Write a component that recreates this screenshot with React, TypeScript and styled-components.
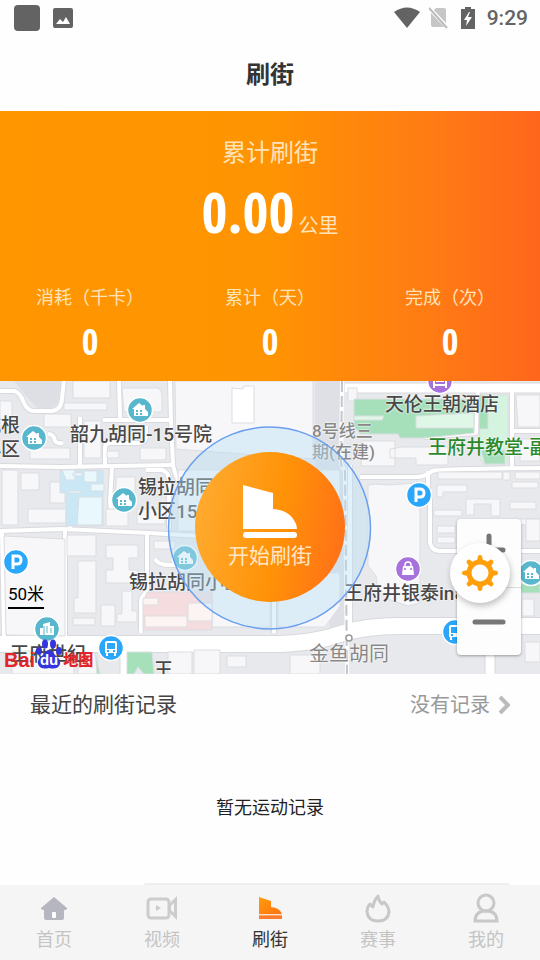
import React from "react";
import styled, { createGlobalStyle } from "styled-components";

const GlobalStyle = createGlobalStyle`
  * { box-sizing: border-box; }
  body { margin: 0; background: #fefefe; }
  button { border: 0; padding: 0; background: none; font: inherit; color: inherit; cursor: pointer; }
`;

const Page = styled.div`
  min-height: 100vh;
  display: flex;
  flex-direction: column;
  background: #fefefe;
  color: #333;
  font-family: Roboto, "Noto Sans CJK SC", sans-serif;
`;

const StatusBar = styled.div`
  display: flex;
  align-items: center;
  justify-content: space-between;
  height: 36px;
  padding: 0 12px 0 14px;
  color: #636363;
`;

const StatusGroup = styled.div<{ $gap: number }>`
  display: flex;
  align-items: center;
  gap: ${(p) => p.$gap}px;
`;

const AppBadge = styled.span`
  width: 26px;
  height: 26px;
  border-radius: 4px;
  background: #636363;
`;

const Clock = styled.time`
  font-size: 21px;
  line-height: 24px;
  font-weight: 500;
`;

const Header = styled.header`
  display: flex;
  align-items: center;
  justify-content: center;
  height: 75px;
  padding-top: 2px;
`;

const Title = styled.h1`
  margin: 0;
  font-size: 24px;
  line-height: 36px;
  font-weight: 700;
  color: #333;
`;

const Summary = styled.section`
  display: flex;
  flex-direction: column;
  align-items: center;
  height: 270px;
  padding-top: 24px;
  background: linear-gradient(90deg, #ff9600 0%, #ff9402 50%, #ff7b14 80%, #ff661c 100%);
`;

const SummaryTitle = styled.h2`
  margin: 0;
  font-size: 24px;
  line-height: 36px;
  font-weight: 400;
  color: #ffe3b8;
`;

const Distance = styled.div`
  display: flex;
  align-items: baseline;
  gap: 4px;
  margin-top: 10px;
`;

const Figure = styled.span<{ $size: number }>`
  font-family: "Open Sans Condensed", "Liberation Sans Narrow", "Roboto Condensed", Roboto, sans-serif;
  font-size: ${(p) => p.$size}px;
  line-height: 60px;
  font-weight: 700;
  color: #fff;
`;

const Unit = styled.span`
  font-size: 20px;
  line-height: 30px;
  font-weight: 400;
  color: #ffe3b8;
`;

const Metrics = styled.dl`
  display: grid;
  grid-template-columns: repeat(3, 1fr);
  width: 100%;
  margin: 43px 0 0;
`;

const Metric = styled.div`
  display: flex;
  flex-direction: column;
  align-items: center;
`;

const MetricName = styled.dt`
  font-size: 18px;
  line-height: 28px;
  font-weight: 400;
  color: #ffe3b8;
`;

const MetricValue = styled.dd`
  margin: 0;
`;

const MapArea = styled.section`
  position: relative;
  display: flex;
  align-items: center;
  justify-content: center;
  height: 293px;
  padding-bottom: 2px;
  overflow: hidden;
  background: #e8e9ed;
`;

const MapLayer = styled.svg`
  position: absolute;
  inset: 0;
  width: 100%;
  height: 100%;
`;

const Place = styled.span<{ $x: number; $y: number; $size?: number; $color?: string; $weight?: number }>`
  position: absolute;
  left: ${(p) => p.$x}px;
  top: ${(p) => p.$y}px;
  font-size: ${(p) => p.$size ?? 19}px;
  line-height: 26px;
  font-weight: ${(p) => p.$weight ?? 500};
  color: ${(p) => p.$color ?? "#484848"};
  white-space: pre;
  text-shadow: 0 0 2px #fff, 0 0 2px #fff;
`;

const MapScale = styled.div`
  position: absolute;
  left: 8px;
  top: 201px;
  width: 36px;
  border-bottom: 2px solid #000;
  font-size: 17px;
  line-height: 25px;
  text-align: center;
  color: #000;
  white-space: nowrap;
`;

const MapLogo = styled.div`
  position: absolute;
  left: 4px;
  top: 258px;
  display: flex;
  align-items: flex-end;
  font-family: "Liberation Sans", "Noto Sans CJK SC", sans-serif;
  font-size: 20px;
  line-height: 18px;
  font-weight: 700;
  color: #e0262b;
`;

const LogoPaw = styled.span`
  position: relative;
  display: flex;
  align-items: flex-end;
  justify-content: center;
  width: 28px;
  height: 30px;
  color: #fff;
  font-size: 15px;
  line-height: 18px;
  svg { position: absolute; inset: 0; }
  b { position: relative; }
`;

const LogoTail = styled.span`
  font-size: 15px;
  font-weight: 900;
`;

const StartButton = styled.button`
  position: relative;
  display: flex;
  flex-direction: column;
  align-items: center;
  width: 150px;
  height: 150px;
  padding-top: 33px;
  border-radius: 50%;
  background: linear-gradient(100deg, #ffab30 5%, #ff9207 55%, #ff6c1b 100%);
`;

const StartLabel = styled.span`
  font-size: 21px;
  line-height: 34px;
  font-weight: 400;
  color: #ffe6c6;
`;

const ZoomPanel = styled.div`
  position: absolute;
  top: 138px;
  right: 19px;
  display: flex;
  flex-direction: column;
  width: 64px;
  border-radius: 4px;
  background: #fdfdfd;
  box-shadow: 0 1px 3px rgba(0, 0, 0, 0.35);
`;

const ZoomButton = styled.button`
  display: flex;
  align-items: center;
  justify-content: center;
  height: 68px;
  &:first-child { padding-bottom: 6px; }
  & + & { border-top: 1px solid #ddd; }
`;

const SettingsButton = styled.button`
  position: absolute;
  top: 162px;
  right: 30px;
  display: flex;
  align-items: center;
  justify-content: center;
  width: 60px;
  height: 60px;
  border-radius: 50%;
  background: #fefefe;
  box-shadow: 1px 3px 6px rgba(0, 0, 0, 0.25);
`;

const Records = styled.section`
  flex: 1;
  display: flex;
  flex-direction: column;
`;

const RecordsHead = styled.div`
  display: flex;
  align-items: center;
  justify-content: space-between;
  height: 62px;
  padding: 0 30px;
`;

const RecordsTitle = styled.h2`
  margin: 0;
  font-size: 21px;
  line-height: 32px;
  font-weight: 400;
  color: #444;
`;

const RecordsLink = styled.a`
  display: flex;
  align-items: center;
  gap: 8px;
  font-size: 20px;
  line-height: 30px;
  color: #999;
  text-decoration: none;
`;

const Empty = styled.p`
  margin: 58px 0 0;
  font-size: 18px;
  line-height: 28px;
  text-align: center;
  color: #222;
`;

const CardEdge = styled.div`
  height: 2px;
  margin: 0 30px 0 144px;
  border-radius: 2px 2px 0 0;
  background: #eee;
`;

const TabBar = styled.nav`
  display: grid;
  grid-template-columns: repeat(5, 1fr);
  height: 75px;
  background: #f5f5f5;
`;

const Tab = styled.a<{ $active?: boolean }>`
  display: flex;
  flex-direction: column;
  align-items: center;
  padding-top: 8px;
  font-size: 18px;
  line-height: 30px;
  font-weight: 400;
  color: ${(p) => (p.$active ? "#333" : "#c4c4c4")};
  text-decoration: none;
  svg { display: block; }
`;

const roads = [
  "M0 10H14Q20 11 24 22Q28 31 36 30H52Q61 29 62 18L64 0",
  "M0 85L60 86L172 84",
  "M80 36L80 85",
  "M105 85V67Q105 62 110 62H140Q146 61 146 55V45",
  "M119 0L120 38",
  "M103 39H172",
  "M170 0L171 40L173 84Q176 100 186 110",
  "M112 87L110 120Q110 130 116 134",
  "M146 89H162Q170 91 169 104V149",
  "M48 53Q54 53 55 60Q57 63 63 62",
  "M70 118V149",
  "M0 150L62 148L150 152L200 155",
  "M2 150L4 255",
  "M147 152V206Q147 211 143 215Q141 217 141 222V252",
  "M155 178Q158 184 170 184H180",
  "M65 150V256",
  "M360 96H418Q427 95 432 90Q438 88 540 87",
  "M428 90V120M424 56L476 52L478 10M512 10V88M514 50H540",
  "M430 118V162Q432 170 440 170H540",
  "M350 84V250M274 205V252",
  "M516 170V240",
];

const blocks: { d: string; fill?: string }[] = [
  { d: "M73 0H110V17H73zM64 22H107V29H64zM44 33H71V46H44zM84 40H101V77H84zM122 7H158Q162 9 162 14V31H124z" },
  { d: "M107 70H119V77H107zM140 67H166V79H140zM0 20H12V45H0zM30 67H70V78H30zM2 89H18V144H2zM21 92H39V109H21zM50 101H65V122H50zM28 128H66V142H28z" },
  { d: "M116 96H135V120H116zM106 128H128V145H106zM137 128H165V143H137zM175 0H313V78L176 68z" },
  { d: "M232 7L243 8L244 5H254V42H232z", fill: "#fff" },
  { d: "M348 7H357V20H348zM361 60H395V85H361zM390 68L402 66H448V84H416V77H390zM516 14H540V46H518zM520 58H540V80H520z" },
  { d: "M438 91H502V98H438zM503 91H510V99H503zM515 91H540V98H515zM437 104H467V111H443V116H437zM512 101H538V107H512zM466 118H500V135H491V123H474V134H466zM510 121H536V128H510zM434 129H462V135H434zM515 138H540V144H515z" },
  { d: "M368 104L376 103L390 104L415 102L420 107V222L408 225L388 218L378 210L376 195L368 185z" },
  { d: "M4 155L65 158V255L6 254z" },
  { d: "M67 154H96V175H67zM78 180H96V232H74V217H78zM106 164H138V177H129V189H138V202H106V189H113V177H106zM122 210H132V230H137V241H117V233H122zM101 224H115V245H101zM73 237H95V244H73z" },
  { d: "M178 89H340V150H178zM154 160H175V168H154zM212 192H270V246H212zM278 192H340V225L325 246H278z" },
  { d: "M437 145H455V152H437zM437 156H455V162H437zM526 138H540V160H526zM522 218H534V235H522z" },
  { d: "M12 270H74V293H12zM78 272H97V293H78zM168 271H192V293H168zM194 269H220V293H194zM227 275H246V286H227zM290 274H320V293H290zM525 261H540V281H525z" },
  { d: "M60 89H103V145H66V112H60z", fill: "#c9e7f4" },
  { d: "M62 89H75V99H66zM84 90H97V101H84zM91 103H104V110H91zM69 110H81V112H69zM79 116H102V144H77zM73 92H82V95H73z", fill: "#e9f8fd" },
  { d: "M147 211H212V249H143V222z", fill: "#f5dcdf" },
  { d: "M143 217H158V224H143zM188 222H212V240H188zM145 235H187V246H145z", fill: "#fbf4f3" },
  { d: "M354 18H474V52L424 57H400L398 53H360L354 45z", fill: "#a5e0bb" },
  { d: "M416 35L474 32V47H416zM354 35H384L382 39H354z", fill: "#dff7e6" },
  { d: "M479 14H508V81L503 84H485L480 78z", fill: "#d5f4df" },
  { d: "M479 14H488V48H479zM481 69H505V83H485z", fill: "#a5e0bb" },
  { d: "M127 271H152L154 293H144L138 286L134 293H127zM95 271L100 293H97zM519 203H540V212H522z", fill: "#a5e0bb" },
];

const Roads = ({ color, width }: { color: string; width: number }) => (
  <g fill="none" stroke={color} strokeLinejoin="round">
    {roads.map((d) => (
      <path key={d} d={d} strokeWidth={width} />
    ))}
    <path d="M0 263H260Q310 264 340 253Q365 245 400 245H545" strokeWidth={width + 12} />
    <path d="M345 7H545M125 264V295M490 250V295" strokeWidth={width + 5} />
  </g>
);

type PinKind = "house" | "tower" | "parking" | "bus" | "bag" | "bed";
const pinFill: Record<PinKind, string> = {
  house: "#58b7cc", tower: "#58b7cc", parking: "#2aa7fb", bus: "#2aa7fb", bag: "#a872dc", bed: "#a872dc",
};
const pins: { kind: PinKind; x: number; y: number }[] = [
  { kind: "house", x: 140, y: 29 },
  { kind: "house", x: 34, y: 57 },
  { kind: "house", x: 124, y: 119 },
  { kind: "house", x: 185, y: 177 },
  { kind: "house", x: 531, y: 192 },
  { kind: "tower", x: 47, y: 248 },
  { kind: "parking", x: 16, y: 181 },
  { kind: "parking", x: 419, y: 114 },
  { kind: "bus", x: 111, y: 267 },
  { kind: "bus", x: 455, y: 251 },
  { kind: "bag", x: 408, y: 188 },
  { kind: "bed", x: 440, y: 0 },
];

const PinGlyph = ({ kind }: { kind: PinKind }) => {
  switch (kind) {
    case "house":
      return (
        <>
          <path d="M-8 -1L-1 -7L3 -4V-5H5V-1L8 2V6H-6V-1z" fill="#fff" />
          <path d="M-4 0H-2V2H-4zM0 0H2V2H0zM-4 3H-2V5H-4zM0 3H2V5H0z" fill="#58b7cc" />
        </>
      );
    case "tower":
      return (
        <>
          <path d="M-7 6V-1H-4V-5L3 -7V-3H7V6z" fill="#fff" />
          <path d="M-3 -3V6M0 -3V4M4 -1V4" stroke="#58b7cc" strokeWidth="1" />
        </>
      );
    case "parking":
      return <path d="M-3 7V-6H1Q5 -6 5 -2Q5 2 1 2H-3" fill="none" stroke="#fff" strokeWidth="3" />;
    case "bus":
      return (
        <>
          <path d="M-4 -7H4Q6 -7 6 -5V5H5V8H3V5H-3V8H-5V5H-6V-5Q-6 -7 -4 -7z" fill="#fff" />
          <path d="M-4 -5H4V1H-4zM-4 2H-2V4H-4zM2 2H4V4H2z" fill="#2aa7fb" />
        </>
      );
    case "bag":
      return (
        <>
          <path d="M-5 -3H5L6 6H-6z" fill="#fff" />
          <path d="M-3 0V-4Q-3 -7 0 -7Q3 -7 3 -4V0" fill="none" stroke="#fff" strokeWidth="1.5" />
          <path d="M-3 -1V1M3 -1V1" stroke="#a872dc" strokeWidth="1.5" />
        </>
      );
    default:
      return <path d="M-6 7V-3M6 7V-3M-6 4H6M-4 0H4" stroke="#fff" strokeWidth="2" />;
  }
};

const Boot = ({ width, height, fill }: { width: number; height: number; fill: string }) => (
  <svg width={width} height={height} viewBox="0 0 54 54" aria-hidden="true">
    <path d="M0 0L30 8V24Q46 25 52 37Q54 40 54 44H0z" fill={fill} />
    <rect y="47" width="54" height="6" rx="3" fill={fill} />
  </svg>
);

const gearTeeth = [0, 45, 90, 135, 180, 225, 270, 315];

const CityMap = () => (
  <>
    <MapLayer viewBox="0 0 540 293" preserveAspectRatio="xMidYMid slice" aria-hidden="true">
      <rect width="540" height="293" fill="#e8e9ed" />
      <path d="M14 0H61L58 22L51 27H37L27 16z" fill="#dedfe4" />
      <path d="M315 0H340V88H315zM314 90H345V248H330z" fill="#dfe0e5" />
      <Roads color="#d8d9de" width={6} />
      <Roads color="#fff" width={4} />
      {blocks.map((b) => (
        <path key={b.d} d={b.d} fill={b.fill ?? "#f7f7fa"} stroke="#dcdde1" strokeWidth="1" />
      ))}
      <path d="M342 0L341 84L345 90L347 293" fill="none" stroke="#fff" strokeWidth="4" />
      <path d="M342 0L341 84L345 90L347 293" fill="none" stroke="#c4c5ca" strokeWidth="2" strokeDasharray="11 4" />
      <circle cx="349" cy="257" r="3" fill="#fff" stroke="#999" strokeWidth="1.5" />
      {pins.map((p) => (
        <g key={`${p.x}-${p.y}`} transform={`translate(${p.x} ${p.y})`}>
          <circle r="12.5" fill={pinFill[p.kind]} stroke="#fff" strokeWidth="1.5" />
          <PinGlyph kind={p.kind} />
        </g>
      ))}
    </MapLayer>
    <Place $x={-18} $y={32}>城根</Place>
    <Place $x={-18} $y={56}>小区</Place>
    <Place $x={70} $y={41}>韶九胡同-15号院</Place>
    <Place $x={138} $y={94}>锡拉胡同</Place>
    <Place $x={138} $y={118}>小区15号</Place>
    <Place $x={129} $y={189}>锡拉胡同小区</Place>
    <Place $x={312} $y={37} $size={17} $color="#888">8号线三</Place>
    <Place $x={312} $y={58} $size={17} $color="#888">期(在建)</Place>
    <Place $x={385} $y={11}>天伦王朝酒店</Place>
    <Place $x={428} $y={54} $color="#2c8a2c">王府井教堂-副堂</Place>
    <Place $x={344} $y={200}>王府井银泰in88</Place>
    <Place $x={309} $y={260} $size={20} $weight={400} $color="#888">金鱼胡同</Place>
    <Place $x={10} $y={261}>王府世纪</Place>
    <Place $x={154} $y={277}>王</Place>
    <MapLayer viewBox="0 0 540 293" preserveAspectRatio="xMidYMid slice" aria-hidden="true">
      <circle cx="269.5" cy="147" r="101" fill="#b9e0f5" fillOpacity="0.42" stroke="#6a9ef0" strokeWidth="1.5" />
    </MapLayer>
  </>
);

const metrics = [
  { name: "消耗（千卡）", value: "0" },
  { name: "累计（天）", value: "0" },
  { name: "完成（次）", value: "0" },
];

export default function App() {
  return (
    <Page>
      <GlobalStyle />
      <StatusBar>
        <StatusGroup $gap={13}>
          <AppBadge />
          <svg width="20" height="20" viewBox="0 0 20 20" aria-hidden="true">
            <rect width="20" height="20" rx="2" fill="#636363" />
            <path d="M3 16L7 11L10 14L13 9L17 16z" fill="#fff" />
          </svg>
        </StatusGroup>
        <StatusGroup $gap={9}>
          <svg width="26" height="22" viewBox="0 0 26 22" aria-hidden="true">
            <path d="M0 5Q13 -4 26 5L13 21z" fill="#636363" />
          </svg>
          <svg width="20" height="22" viewBox="0 0 20 22" aria-hidden="true">
            <path d="M7 1H15Q17 1 17 3V20H4Q2 20 2 18V6z" fill="#c6c6c6" />
            <path d="M0 1L19 21" stroke="#fefefe" strokeWidth="4" />
            <path d="M0 1L18 21" stroke="#bbb" strokeWidth="2" />
          </svg>
          <svg width="20" height="24" viewBox="0 0 20 24" aria-hidden="true">
            <path d="M7 1H13V3H17V23H3V3H7z" fill="#636363" />
            <path d="M11 6L6 14H9L8 20L14 11H10L12 6z" fill="#fff" />
          </svg>
          <Clock>9:29</Clock>
        </StatusGroup>
      </StatusBar>

      <Header>
        <Title>刷街</Title>
      </Header>

      <Summary>
        <SummaryTitle>累计刷街</SummaryTitle>
        <Distance>
          <Figure $size={56}>0.00</Figure>
          <Unit>公里</Unit>
        </Distance>
        <Metrics>
          {metrics.map((m) => (
            <Metric key={m.name}>
              <MetricName>{m.name}</MetricName>
              <MetricValue>
                <Figure $size={36}>{m.value}</Figure>
              </MetricValue>
            </Metric>
          ))}
        </Metrics>
      </Summary>

      <MapArea aria-label="地图">
        <CityMap />
        <MapScale>50米</MapScale>
        <MapLogo>
          Bai
          <LogoPaw>
            <svg width="28" height="30" viewBox="0 0 28 30" aria-hidden="true">
              <g fill="#3435dd">
                <ellipse cx="4" cy="12" rx="3" ry="4" />
                <ellipse cx="10" cy="5" rx="3" ry="4.5" />
                <ellipse cx="18" cy="5" rx="3" ry="4.5" />
                <ellipse cx="24" cy="12" rx="3" ry="4" />
                <path d="M14 11Q17 11 20 16Q26 20 25 25Q23 31 14 29Q5 31 3 25Q2 20 8 16Q11 11 14 11z" />
              </g>
            </svg>
            <b>du</b>
          </LogoPaw>
          <LogoTail>地图</LogoTail>
        </MapLogo>
        <ZoomPanel>
          <ZoomButton aria-label="放大">
            <svg width="34" height="34" viewBox="0 0 34 34" aria-hidden="true">
              <path d="M17 3V31M3 17H31" stroke="#777" strokeWidth="5" strokeLinecap="round" />
            </svg>
          </ZoomButton>
          <ZoomButton aria-label="缩小">
            <svg width="34" height="34" viewBox="0 0 34 34" aria-hidden="true">
              <path d="M3 17H31" stroke="#777" strokeWidth="5" strokeLinecap="round" />
            </svg>
          </ZoomButton>
        </ZoomPanel>
        <SettingsButton aria-label="设置">
          <svg width="36" height="36" viewBox="-18 -18 36 36" aria-hidden="true">
            <circle r="11" fill="none" stroke="#ff9f0a" strokeWidth="5" />
            {gearTeeth.map((a) => (
              <path key={a} d="M-3 -12L-2 -17Q0 -19 2 -17L3 -12z" fill="#ff9f0a" transform={`rotate(${a})`} />
            ))}
          </svg>
        </SettingsButton>
        <StartButton>
          <Boot width={54} height={54} fill="#fff" />
          <StartLabel>开始刷街</StartLabel>
        </StartButton>
      </MapArea>

      <Records>
        <RecordsHead>
          <RecordsTitle>最近的刷街记录</RecordsTitle>
          <RecordsLink href="#records">
            没有记录
            <svg width="12" height="20" viewBox="0 0 12 20" aria-hidden="true">
              <path d="M2 2L10 10L2 18" fill="none" stroke="#bbb" strokeWidth="4" />
            </svg>
          </RecordsLink>
        </RecordsHead>
        <Empty>暂无运动记录</Empty>
      </Records>

      <CardEdge />
      <TabBar>
        <Tab href="#home">
          <svg width="32" height="32" viewBox="0 0 32 32" aria-hidden="true">
            <path d="M16 4L29 15Q29 17 26 17V25Q26 27 24 27H8Q6 27 6 25V17Q3 17 3 15z" fill="#b5b6bf" />
            <rect x="14" y="19" width="4" height="6" rx="1" fill="#fff" />
          </svg>
          首页
        </Tab>
        <Tab href="#video">
          <svg width="32" height="32" viewBox="0 0 32 32" aria-hidden="true">
            <rect x="2" y="6" width="21" height="19" rx="3" fill="none" stroke="#ccc" strokeWidth="3" />
            <path d="M10 12L15 15L10 18zM31 3V27L23 19V11z" fill="#ccc" />
            <path d="M28 10V20L25 17V13z" fill="#f5f5f5" />
          </svg>
          视频
        </Tab>
        <Tab href="#street" $active aria-current="page">
          <svg width="32" height="32" viewBox="0 0 32 32" aria-hidden="true">
            <defs>
              <linearGradient id="boot" x1="0" y1="0" x2="1" y2="1">
                <stop offset="0" stopColor="#ff9d0a" />
                <stop offset="1" stopColor="#ff7214" />
              </linearGradient>
            </defs>
            <path d="M5 4L17 8V14Q26 15 28 21H5z" fill="url(#boot)" />
            <path d="M5 22H28V26H5z" fill="#ff7a2a" />
            <path d="M5 22H28" stroke="#ffc9a0" strokeWidth="1" />
          </svg>
          刷街
        </Tab>
        <Tab href="#events">
          <svg width="32" height="32" viewBox="0 0 32 32" aria-hidden="true">
            <path
              d="M16 3Q16 7 20 11L22 9Q27 14 27 19Q26 28 16 28Q6 28 5 19Q5 14 8 11L11 14Q12 7 16 3z"
              fill="none"
              stroke="#c8c8c8"
              strokeWidth="3"
              strokeLinejoin="round"
            />
          </svg>
          赛事
        </Tab>
        <Tab href="#me">
          <svg width="32" height="32" viewBox="0 0 32 32" aria-hidden="true">
            <circle cx="16" cy="10" r="8" fill="none" stroke="#c8c8c8" strokeWidth="3" />
            <path d="M5 28Q5 18 16 18Q27 18 27 28z" fill="none" stroke="#c8c8c8" strokeWidth="3" />
          </svg>
          我的
        </Tab>
      </TabBar>
    </Page>
  );
}
